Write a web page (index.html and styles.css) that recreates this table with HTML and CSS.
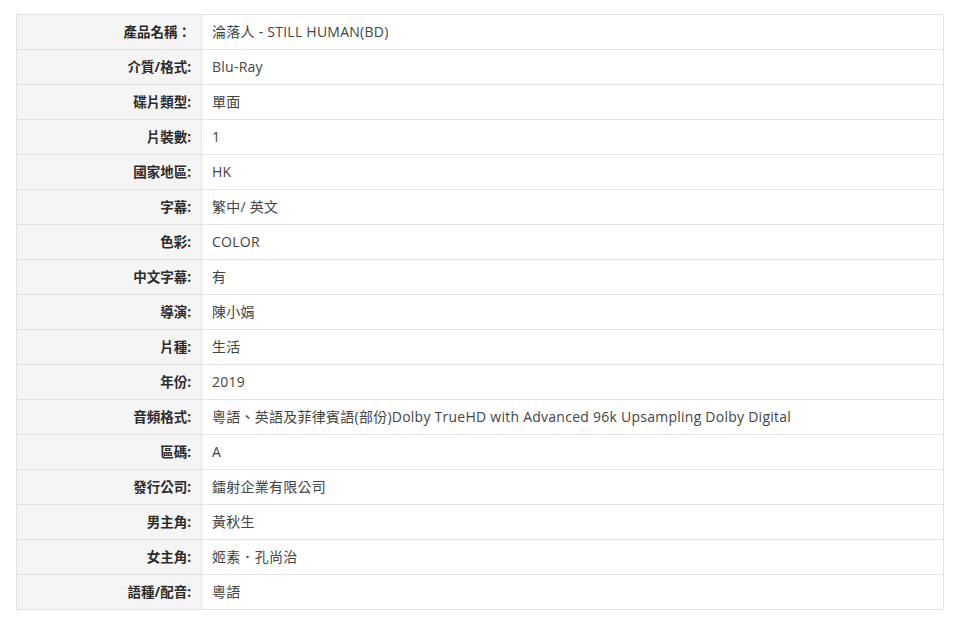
FILE: index.html
```html
<!DOCTYPE html>
<html>

<head>
    <title>產品資料</title>
    <link rel="stylesheet" href="styles.css">
</head>

<body>
    <section class="spec">
        <table class="spec-table">
            <tr><th>產品名稱：</th><td>淪落人 - STILL HUMAN(BD)</td></tr>
            <tr><th>介質/格式:</th><td>Blu-Ray</td></tr>
            <tr><th>碟片類型:</th><td>單面</td></tr>
            <tr><th>片裝數:</th><td>1</td></tr>
            <tr><th>國家地區:</th><td>HK</td></tr>
            <tr><th>字幕:</th><td>繁中/ 英文</td></tr>
            <tr><th>色彩:</th><td>COLOR</td></tr>
            <tr><th>中文字幕:</th><td>有</td></tr>
            <tr><th>導演:</th><td>陳小娟</td></tr>
            <tr><th>片種:</th><td>生活</td></tr>
            <tr><th>年份:</th><td>2019</td></tr>
            <tr><th>音頻格式:</th><td>粵語、英語及菲律賓語(部份)Dolby TrueHD with Advanced 96k Upsampling Dolby Digital</td></tr>
            <tr><th>區碼:</th><td>A</td></tr>
            <tr><th>發行公司:</th><td>鐳射企業有限公司</td></tr>
            <tr><th>男主角:</th><td>黃秋生</td></tr>
            <tr><th>女主角:</th><td>姬素．孔尚治</td></tr>
            <tr><th>語種/配音:</th><td>粵語</td></tr>
        </table>
    </section>
</body>

</html>
```

FILE: styles.css
```css
* {
    box-sizing: border-box;
}

body {
    margin: 0;
    background-color: #FFF;
    font-family: "Open Sans", "Noto Sans CJK TC", sans-serif;
    font-size: 14px;
    color: #333;
}

.spec {
    padding: 14px 16px;
}

.spec-table {
    width: 928px;
    border-collapse: collapse;
    border: 1px solid #e3e3e3;
}

.spec-table th,
.spec-table td {
    height: 35px;
    padding: 0 10px 2px 10px;
    border-top: 1px solid #e3e3e3;
    vertical-align: middle;
}

.spec-table th {
    width: 185px;
    padding-right: 10px;
    text-align: right;
    font-size: 13.5px;
    font-weight: bold;
    background-color: #f5f5f5;
    border-right: 1px solid #e3e3e3;
    color: #2b2b2b;
}

.spec-table td {
    text-align: left;
    font-weight: normal;
    letter-spacing: 0.25px;
    color: #444;
    background-color: #FFF;
}
```
